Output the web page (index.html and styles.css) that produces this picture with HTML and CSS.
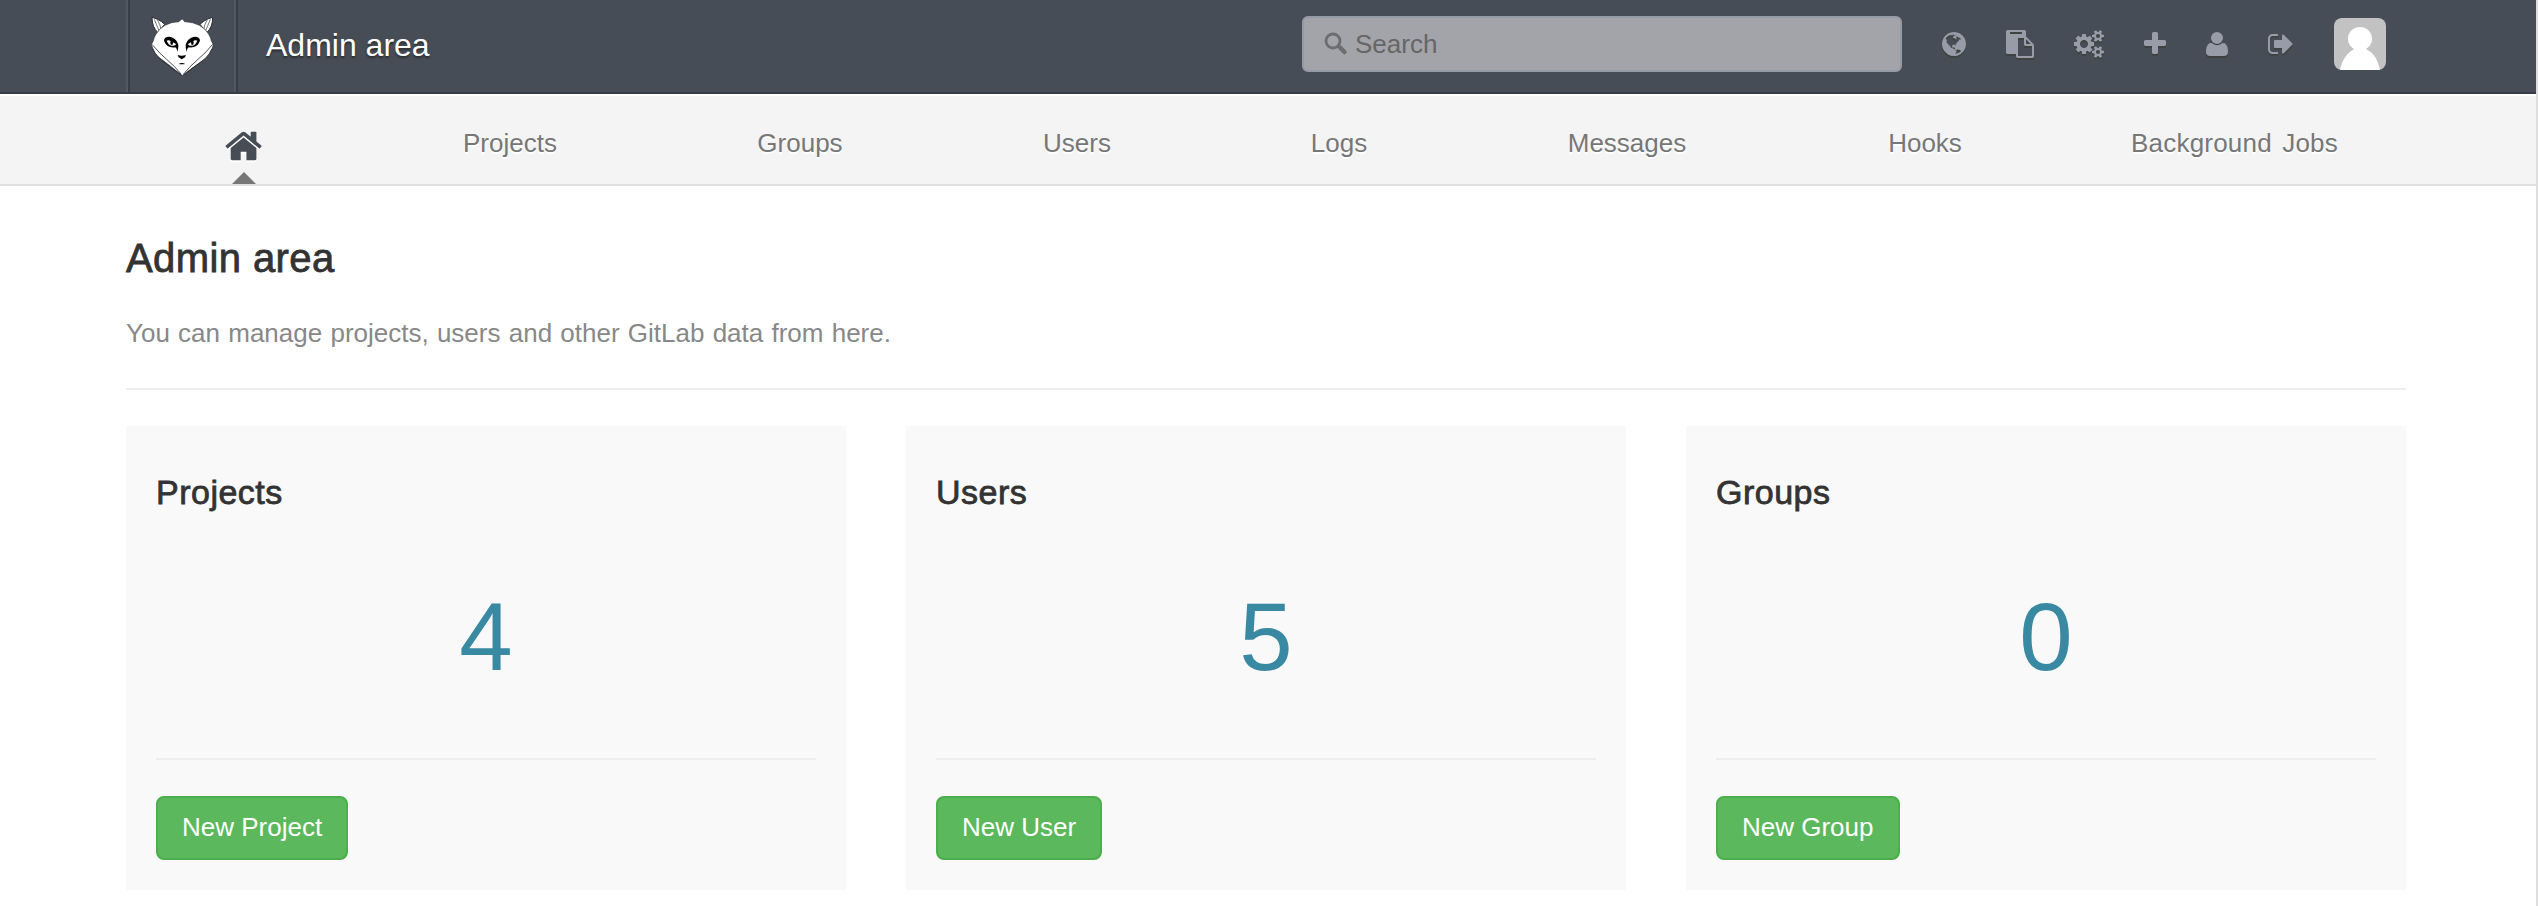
FILE: index.html
```html
<!DOCTYPE html>
<html lang="en">
<head>
<meta charset="utf-8">
<title>Admin area</title>
<link rel="stylesheet" href="styles.css">
</head>
<body>
<header class="header">
  <div class="container header-inner">
    <a class="logo">
      <svg width="72" height="72" viewBox="0 0 216 216">
        <g fill="#fff" stroke="#2a2d33" stroke-width="3" stroke-linejoin="round">
          <path d="M18 22L33 27Q48 34 56 43L36 68Q18 52 18 22Z"/>
          <path d="M200 22L185 27Q170 34 162 43L182 68Q200 52 200 22Z"/>
          <path d="M25 28Q32 46 40 64M193 28Q186 46 178 64M34 29Q42 42 45 57M184 29Q176 42 173 57" stroke-width="2" fill="none"/>
        </g>
        <path fill="#fff" stroke="#2a2d33" stroke-width="2" stroke-linejoin="round" d="M22 92Q24 82 29 74Q50 37 99 35L106 28L113 28Q111 32 116 35Q168 37 189 74Q194 82 196 92L202 104L198 118Q194 130 180 145L109 195L36 140Q22 126 20 114L16 104Z"/>
        <path fill="#fff" d="M36 136L109 196L182 136Z"/>
        <path fill="none" stroke="#2a2d33" stroke-width="2.500" d="M18 103Q42 132 62 148Q88 170 106 193M200 103Q176 132 156 148Q130 170 112 193M20 116Q26 132 42 147L106 196M198 116Q192 132 176 147L112 196"/>
        <path d="M54 91C55 80 68 77 80 83C91 89 95 96 97 105Q98 116 94 125Q93 115 88 112C74 115 58 108 54 91ZM162 91C161 80 148 77 136 83C125 89 121 96 119 105Q118 116 122 125Q123 115 128 112C142 115 158 108 162 91Z"/>
        <path fill="#fff" d="M62 92Q68 89 76 94L91 103Q84 109 76 107Q68 105 62 92ZM154 92Q148 89 140 94L125 103Q132 109 140 107Q148 105 154 92Z"/>
        <ellipse cx="77" cy="98" rx="4" ry="7"/><ellipse cx="139" cy="98" rx="4" ry="7"/>
        <path d="M95 135Q107 139 120 135L117 142L107 148L98 142ZM98 162Q107 156 118 162Q107 164 98 162Z"/>
      </svg>
    </a>
    <h1 class="title">Admin area</h1>
    <div class="search">
      <svg width="24" height="24" viewBox="0 0 24 24"><ellipse cx="9" cy="9" rx="7" ry="7" fill="none" stroke="#6b6d6e" stroke-width="2.800"/><path d="M14 14L16 16" stroke="#6b6d6e" stroke-width="3"/><path d="M16 15.500L20.500 20" stroke="#6b6d6e" stroke-width="4.500" stroke-linecap="round"/></svg>
      <span>Search</span>
    </div>
    <nav class="tools">
      <a class="tool globe"><svg width="28" height="28" viewBox="128 0 1792 1792"><path d="M896 128q209 0 385.500 103t279.500 279.500 103 385.500-103 385.500-279.500 279.500-385.500 103-385.500-103-279.500-279.500-103-385.500 103-385.500 279.500-279.500 385.500-103zm274 521q-2 1-9.500 9.500t-13.500 9.500q2 0 4.500-5t5-11 3.500-7q6-7 22-15 14-6 52-12 34-8 51 11-2-2 9.500-13t14.500-12q3-2 15-4.500t15-7.500l2-22q-12 1-17.500-7t-6.500-21q0 2-6 8 0-7-4.500-8t-11.500 1-9 1q-10-3-15-7.500t-8-16.500-4-15q-2-5-9.500-11t-9.500-10q-1-2-2.500-5.500t-3-6.500-4-5.500-5.500-2.500-7 5-7.500 10-4.500 5q-3-2-6-1.500t-4.500 1-4.500 3-5 3.500q-3 2-8.500 3t-8.500 2q15-5-1-11-10-4-16-3 9-4 7.500-12t-8.500-14h5q-1-4-8.500-8.500t-17.500-8.500-13-6q-8-5-34-9.500t-33-.5q-5 6-4.500 10.500t4 14 3.500 12.500q1 6-5.500 13t-6.500 12q0 7 14 15.500t10 21.500q-3 8-16 16t-16 12q-5 8-1.500 18.500t10.500 16.500q2 2 1.500 4t-3.500 4.500-5.500 4-6.500 3.500l-3 2q-11 5-20.500-6t-13.500-26q-7-25-16-30-23-8-29 1-5-13-41-26-25-9-58-4 6-1 0-15-7-15-19-12 3-6 4-17.500t1-13.500q3-13 12-23 1-1 7-8.500t9.500-13.500.5-6q35 4 50-11 5-5 11.500-17t10.500-17q9-6 14-5.500t14.500 5.500 14.500 5q14 1 15.500-11t-7.500-20q12 1 3-17-4-7-8-9-12-4-27 5-8 4 2 8-1-1-9.500 10.500t-16.500 17.500-16-5q-1-1-5.500-13.500t-9.500-13.500q-8 0-16 15 3-8-11-15t-24-8q19-12-8-27-7-4-20.500-5t-19.500 4q-5 7-5.500 11.500t5 8 10.500 5.500 11.500 4 8.500 3q14 10 8 14-2 1-8.500 3.500t-11.500 4.500-6 4q-3 4 0 14t-2 14q-5-5-9-17.500t-7-16.500q7 9-25 6l-10-1q-4 0-16 2t-20.500 1-13.500-8q-4-8 0-20 1-4 4-2-4-3-11-9.500t-10-8.500q-46 15-94 41 6 1 12-1 5-2 13-6.500t10-5.500q34-14 42-7l5-5q14 16 20 25-7-4-30-1-20 6-22 12 7 12 5 18-4-3-11.500-10t-14.500-11-15-5q-16 0-22 1-146 80-235 222 7 7 12 8 4 1 5 9t2.500 11 11.500-3q9 8 3 19 1-1 44 27 19 17 21 21 3 11-10 18-1-2-9-9t-9-4q-3 5 .5 18.500t10.500 12.500q-7 0-9.500 16t-2.500 35.500-1 23.500l2 1q-3 12 5.500 34.500t21.500 19.500q-13 3 20 43 6 8 8 9 3 2 12 7.500t15 10 10 10.500q4 5 10 22.500t14 23.500q-2 6 9.500 20t10.500 23q-1 0-2.500 1t-2.500 1q3 7 15.500 14t15.500 13q1 3 2 10t3 11 8 2q2-20-24-62-15-25-17-29-3-5-5.500-15.500t-4.500-14.500q2 0 6 1.500t8.500 3.500 7.500 4 2 3q-3 7 2 17.500t12 18.500 17 19 12 13q6 6 14 19.500t0 13.500q9 0 20 10t17 20q5 8 8 26t5 24q2 7 8.500 13.500t12.500 9.500l16 8 13 7q5 2 18.500 10.500t21.500 11.500q10 4 16 4t14.500-2.500 13.500-3.500q15-2 29 15t21 21q36 19 55 11-2 1 .5 7.500t8 15.500 9 14.500 5.500 8.500q5 6 18 15t18 15q6-4 7-9-3 8 7 20t18 10q14-3 14-32-31 15-49-18 0-1-2.500-5.500t-4-8.500-2.500-8.500 0-7.500 5-3q9 0 10-3.500t-2-12.500-4-13q-1-8-11-20t-12-15q-5 9-16 8t-16-9q0 1-1.500 5.500t-1.500 6.500q-13 0-15-1 1-3 2.500-17.500t3.500-22.500q1-4 5.500-12t7.500-14.500 4-12.500-4.500-9.500-17.500-2.500q-19 1-26 20-1 3-3 10.500t-5 11.500-9 7q-7 3-24 2t-24-5q-13-8-22.500-29t-9.500-37q0-10 2.500-26.500t3-25-5.500-24.500q3-2 9-9.500t10-10.500q2-1 4.500-1.500t4.500 0 4-1.500 3-6q-1-1-4-3-3-3-4-3 7 3 28.500-1.500t27.500 1.500q15 11 22-2 0-1-2.500-9.500t-.5-13.500q5 27 29 9 3 3 15.500 5t17.500 5q3 2 7 5.500t5.500 4.500 5-.5 8.500-6.500q10 14 12 24 11 40 19 44 7 3 11 2t4.500-9.500 0-14-1.500-12.500l-1-8v-18l-1-8q-15-3-18.500-12t1.500-18.500 15-18.500q1-1 8-3.500t15.500-6.500 12.500-8q21-19 15-35 7 0 11-9-1 0-5-3t-7.500-5-4.500-2q9-5 2-16 5-3 7.500-11t7.500-10q9 12 21 2 7-8 1-16 5-7 20.500-10.500t18.500-9.500q7 2 8-2t1-12 3-12q4-5 15-9t13-5l17-11q3-4 0-4 18 2 31-11 10-11-6-20 3-6-3-9.500t-15-5.500q3-1 11.500-.5t10.500-1.500q15-10-7-16-17-5-43 12zm-163 877q206-36 351-189-3-3-12.500-4.500t-12.500-3.500q-18-7-24-8 1-7-2.500-13t-8-9-12.500-8-11-7q-2-2-7-6t-7-5.500-7.500-4.500-8.500-2-10 1l-3 1q-3 1-5.500 2.500t-5.500 3-4 3 0 2.500q-21-17-36-22-5-1-11-5.500t-10.500-7-10-1.500-11.500 7q-5 5-6 15t-2 13q-7-5 0-17.500t2-18.500q-3-6-10.500-4.500t-12 4.500-11.500 8.500-9 6.500-8.500 5.500-8.500 7.500q-3 4-6 12t-5 11q-2-4-11.500-6.500t-9.500-5.500q2 10 4 35t5 38q7 31-12 48-27 25-29 40-4 22 12 26 0 7-8 20.500t-7 21.500q0 6 2 16z"/></svg></a>
      <a class="tool paste"><svg width="28" height="28" viewBox="0 0 1792 1792"><path d="M768 1664h896v-640h-416q-40 0-68-28t-28-68v-416h-384v1152zm256-1440v-64q0-13-9.500-22.500t-22.500-9.500h-704q-13 0-22.500 9.500t-9.500 22.500v64q0 13 9.500 22.500t22.500 9.500h704q13 0 22.500-9.500t9.500-22.500zm256 672h299l-299-299v299zm512 128v672q0 40-28 68t-68 28h-960q-40 0-68-28t-28-68v-160h-544q-40 0-68-28t-28-68v-1344q0-40 28-68t68-28h1088q40 0 68 28t28 68v328q21 13 36 28l408 408q28 28 48 76t20 88z"/></svg></a>
      <a class="tool cogs"><svg width="30" height="28" viewBox="0 0 1920 1792"><path d="M896 896q0-106-75-181t-181-75-181 75-75 181 75 181 181 75 181-75 75-181zm768 512q0-52-38-90t-90-38-90 38-38 90q0 53 37.500 90.500t90.500 37.500 90.500-37.500 37.500-90.500zm0-1024q0-52-38-90t-90-38-90 38-38 90q0 53 37.500 90.500t90.500 37.500 90.500-37.500 37.500-90.500zm-384 421v185q0 10-7 19.500t-16 10.500l-155 24q-11 35-32 76 34 48 90 115 7 11 7 20 0 12-7 19-23 30-82.500 89.500t-78.500 59.500q-11 0-21-7l-115-90q-37 19-77 31-11 108-23 155-7 24-30 24h-186q-11 0-20-7.500t-10-17.500l-23-153q-34-10-75-31l-118 89q-7 7-20 7-11 0-21-8-144-133-144-160 0-9 7-19 10-14 41-53t47-61q-23-44-35-82l-152-24q-10-1-17-9.500t-7-19.500v-185q0-10 7-19.500t16-10.500l155-24q11-35 32-76-34-48-90-115-7-11-7-20 0-12 7-20 22-30 82-89t79-59q11 0 21 7l115 90q34-18 77-32 11-108 23-154 7-24 30-24h186q11 0 20 7.500t10 17.500l23 153q34 10 75 31l118-89q8-7 20-7 11 0 21 8 144 133 144 160 0 8-7 19-12 16-42 54t-45 60q23 48 34 82l152 23q10 2 17 10.500t7 19.500zm640 533v140q0 16-149 31-12 27-30 52 51 113 51 138 0 4-4 7-122 71-124 71-8 0-46-47t-52-68q-20 2-30 2t-30-2q-14 21-52 68t-46 47q-2 0-124-71-4-3-4-7 0-25 51-138-18-25-30-52-149-15-149-31v-140q0-16 149-31 13-29 30-52-51-113-51-138 0-4 4-7 4-2 35-20t59-34 30-16q8 0 46 46.500t52 67.500q20-2 30-2t30 2q51-71 92-112l6-2q4 0 124 70 4 3 4 7 0 25-51 138 17 23 30 52 149 15 149 31zm0-1024v140q0 16-149 31-12 27-30 52 51 113 51 138 0 4-4 7-122 71-124 71-8 0-46-47t-52-68q-20 2-30 2t-30-2q-14 21-52 68t-46 47q-2 0-124-71-4-3-4-7 0-25 51-138-18-25-30-52-149-15-149-31v-140q0-16 149-31 13-29 30-52-51-113-51-138 0-4 4-7 4-2 35-20t59-34 30-16q8 0 46 46.500t52 67.500q20-2 30-2t30 2q51-71 92-112l6-2q4 0 124 70 4 3 4 7 0 25-51 138 17 23 30 52 149 15 149 31z"/></svg></a>
      <a class="tool plus"><svg width="22" height="28" viewBox="192 0 1408 1792"><path d="M1600 736v192q0 40-28 68t-68 28h-416v416q0 40-28 68t-68 28h-192q-40 0-68-28t-28-68v-416h-416q-40 0-68-28t-28-68v-192q0-40 28-68t68-28h416v-416q0-40 28-68t68-28h192q40 0 68 28t28 68v416h416q40 0 68 28t28 68z"/></svg></a>
      <a class="tool user"><svg width="22" height="28" viewBox="192 0 1408 1792"><path d="M1600 1405q0 120-73 189.500t-194 69.500h-874q-121 0-194-69.500t-73-189.500q0-53 3.500-103.500t14-109 26.500-108.500 43-97.500 62-81 85.500-53.500 111.500-20q9 0 42 21.500t74.500 48 108 48 133.500 21.500 133.500-21.500 108-48 74.500-48 42-21.500q61 0 111.500 20t85.500 53.500 62 81 43 97.500 26.500 108.500 14 109 3.500 103.500zm-320-893q0 159-112.500 271.500t-271.500 112.500-271.500-112.500-112.500-271.500 112.500-271.500 271.500-112.500 271.500 112.500 112.500 271.500z"/></svg></a>
      <a class="tool signout"><svg width="25" height="28" viewBox="64 0 1600 1792"><path d="M704 1440q0 4 1 20t.5 26.500-3 23.500-10 19.500-20.500 6.500h-320q-119 0-203.500-84.500t-84.500-203.500v-704q0-119 84.500-203.500t203.500-84.500h320q13 0 22.500 9.500t9.500 22.500q0 4 1 20t.5 26.500-3 23.500-10 19.500-20.500 6.500h-320q-66 0-113 47t-47 113v704q0 66 47 113t113 47h312l11.500 1 11.500 3 8 5.500 7 9 2 13.500zm928-544q0 26-19 45l-544 544q-19 19-45 19t-45-19-19-45v-288h-448q-26 0-45-19t-19-45v-384q0-26 19-45t45-19h448v-288q0-26 19-45t45-19 45 19l544 544q19 19 19 45z"/></svg></a>
    </nav>
    <svg class="avatar" width="52" height="52" viewBox="0 0 52 52"><rect width="52" height="52" fill="#c2c2c2"/><path fill="#fff" d="M26 9C33 9 38 14 38 21C38 26 35 29 32 31C40 35 44 42 46 52H6C8 42 13 35 20 31C17 29 14 26 14 21C14 14 19 9 26 9Z"/></svg>
  </div>
</header>
<nav class="main-nav">
  <div class="container nav-grid">
    <a class="home"><svg width="37.140" height="40" viewBox="0 0 1664 1792"><path d="M1408 992v480q0 26-19 45t-45 19h-384v-384h-256v384h-384q-26 0-45-19t-19-45v-480q0-1 .5-3t.5-3l575-474 575 474q1 2 1 6zm223-69l-62 74q-8 9-21 11h-3q-13 0-21-7l-692-577-692 577q-12 8-24 7-13-2-21-11l-62-74q-8-10-7-23.500t11-21.500l719-599q32-26 76-26t76 26l244 204v-195q0-14 9-23t23-9h192q14 0 23 9t9 23v408l219 182q10 8 11 21.500t-7 23.500z"/></svg></a>
    <a>Projects</a>
    <a>Groups</a>
    <a>Users</a>
    <a>Logs</a>
    <a>Messages</a>
    <a>Hooks</a>
    <a class="wide">Background Jobs</a>
  </div>
</nav>
<main class="container content">
  <h3 class="page-title">Admin area</h3>
  <p class="light">You can manage projects, users and other GitLab data from here.</p>
  <hr class="rule">
  <div class="cards">
    <section class="card"><h4>Projects</h4><div class="count">4</div><hr class="rule"><a class="btn">New Project</a></section>
    <section class="card"><h4>Users</h4><div class="count">5</div><hr class="rule"><a class="btn">New User</a></section>
    <section class="card"><h4>Groups</h4><div class="count">0</div><hr class="rule"><a class="btn">New Group</a></section>
  </div>
</main>
</body>
</html>
```
FILE: styles.css
```css
* { box-sizing: border-box; }
html { background: #fff; }
body {
  margin: 0;
  min-height: 906px;
  border-right: 2px solid #dedede;
  font-family: "Liberation Sans", Arial, sans-serif;
  font-size: 26px;
  color: #333;
}
.container { width: 2280px; margin-left: 126px; }

.header {
  height: 94px;
  background: #474d57;
  border-bottom: 2px solid #373d47;
}
.header-inner { display: flex; height: 92px; }
.logo {
  display: flex;
  width: 112px;
  padding: 10px 0 0 18px;
  border: solid;
  border-width: 0 2px;
  border-left-color: #52585f;
  border-right-color: #373d47;
  box-shadow: inset 2px 0 #373d47, inset -2px 0 #52585f;
}
.title {
  width: 1064px;
  margin: 0;
  padding: 26px 0 0 28px;
  font-size: 32px;
  font-weight: normal;
  line-height: 38px;
  color: #fff;
  text-shadow: 0 2px 2px #2d2d2d;
}
.search {
  display: flex;
  width: 600px;
  height: 56px;
  margin-top: 16px;
  padding: 14px 20px;
  border: 2px solid #959ba6;
  border-radius: 6px;
  background: #a2a4a9;
  color: #666;
}
.search span { margin-left: 7px; line-height: 24px; }
.tools { display: flex; margin-left: 40px; padding-top: 30px; }
.tool svg { display: block; fill: #979ca8; filter: drop-shadow(0 2px 0 #40423f); }
.paste { margin-left: 36px; }
.cogs { margin-left: 40px; }
.plus { margin-left: 40px; }
.user { margin-left: 40px; }
.signout { margin-left: 40px; }
.avatar { margin: 18px 0 0 41px; border-radius: 8px; }

.main-nav {
  height: 92px;
  background: #f4f4f4;
  border-top: 2px solid #fff;
  border-bottom: 2px solid #e1e1e1;
}
.nav-grid {
  display: grid;
  grid-template: 88px / 237px 294px 286px 268px 256px 320px 276px 343px;
  text-align: center;
  line-height: 94px;
  color: #777;
  text-shadow: 0 2px 0 #fff;
}
.wide { letter-spacing: .2px; word-spacing: 3px; }
.home {
  display: flex;
  flex-direction: column;
  align-items: center;
  justify-content: space-between;
  padding: 30px 2px 0 0;
}
.home svg { fill: #474d57; filter: drop-shadow(0 2px 0 #fff); }
.home::after {
  content: "";
  border: 12px solid transparent;
  border-top-width: 0;
  border-bottom-color: #777;
}

.content { padding-top: 48px; }
.page-title {
  margin: 0;
  font-size: 40px;
  font-weight: normal;
  line-height: 48px;
  letter-spacing: .4px;
  -webkit-text-stroke: .8px #333;
}
.light { margin: 34px 0 0; line-height: 34px; word-spacing: 1px; color: #888; }
.rule { height: 2px; margin: 0; border: 0; background: #eee; }
.content > .rule { margin-top: 38px; }
.cards { display: grid; grid-template-columns: repeat(3, 720px); gap: 60px; margin-top: 36px; }
.card { height: 464px; padding: 46px 30px 0; background: #f9f9f9; }
.card h4 {
  margin: 0;
  font-size: 34px;
  font-weight: normal;
  line-height: 40px;
  letter-spacing: .5px;
  -webkit-text-stroke: .8px #333;
}
.count { margin-top: 73px; font-size: 96px; line-height: 104px; text-align: center; color: #3a89a3; }
.card .rule { margin-top: 69px; }
.btn {
  display: inline-block;
  height: 64px;
  margin-top: 36px;
  padding: 0 24px;
  border: 2px solid #4cae4c;
  border-radius: 8px;
  background: #5cb85c;
  color: #fff;
  line-height: 58px;
}
```
